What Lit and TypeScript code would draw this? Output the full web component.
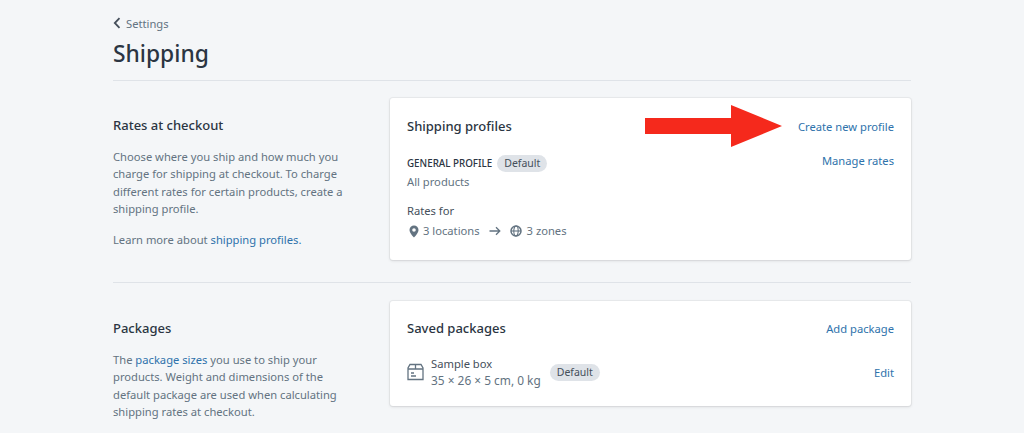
import { LitElement, html, css } from "lit";
import { customElement } from "lit/decorators.js";

@customElement("app-root")
export class AppRoot extends LitElement {
  static styles = css`
    :host { display: block; height: 433px; overflow: hidden; background: #f4f6f8; font-family: "Noto Sans", "Open Sans", sans-serif; font-size: 11.2px; color: #212b36; }
    a { color: #2e72ab; text-decoration: none; }
    .page { width: 798px; margin-left: 113px; padding-top: 14px; }
    .back { display: flex; align-items: center; gap: 5px; height: 18px; color: #637381; }
    .back svg { display: block; }
    h1 { margin: 5px 0 0; font-size: 22.8px; line-height: 34px; font-weight: 500; color: #2b3542; }
    .head { height: 66px; border-bottom: 1px solid #dfe3e8; }
    .section { display: grid; grid-template-columns: 253px 521px; column-gap: 24px; padding-top: 17px; }
    .first { height: 184px; border-bottom: 1px solid #dfe3e8; }
    .second { padding-top: 18px; }
    .side h2 { margin: 0; font-size: 13px; line-height: 18px; font-weight: 500; color: #2b3542; padding-top: 18px; }
    .side p { margin: 0; max-width: 235px; color: #637381; line-height: 17.4px; }
    .first .side p { margin-top: 14px; }
    .first .side p + p { margin-top: 13px; }
    .second .side p { margin-top: 14px; }
    .card { background: #fff; border-radius: 3px; box-shadow: 0 0 0 1px rgba(63,63,68,.05), 0 1px 3px rgba(63,63,68,.15); padding: 19px 17px 0 17px; box-sizing: border-box; position: relative; }
    .c1 { height: 162px; }
    .c2 { height: 105px; padding-top: 18px; }
    .row { display: flex; justify-content: space-between; align-items: center; }
    .title { font-size: 13px; line-height: 18px; font-weight: 500; color: #2b3542; }
    .profile { position: relative; margin-top: 18px; height: 20px; display: flex; align-items: center; }
    .profile a { position: absolute; right: 0; top: -1px; line-height: 18px; }
    .gp { display: flex; align-items: center; gap: 5px; font-size: 9.8px; font-weight: 500; color: #2b3542; }
    .badge { display: inline-block; background: #dfe3e8; color: #454f5b; border-radius: 10px; padding: 0 7px; line-height: 17px; font-size: 10.5px; font-weight: 400; }
    .muted { color: #637381; }
    .all { margin-top: 0; line-height: 18px; }
    .rates { margin-top: 11px; line-height: 18px; color: #454f5b; }
    .loc { display: flex; align-items: center; margin-top: 2px; line-height: 18px; color: #637381; }
    .loc svg { display: block; flex: none; }
    .pin { margin-left: 2px; }
    .l1 { margin-left: 4px; }
    .l2 { margin-left: 9px; }
    .l3 { margin-left: 9px; }
    .l4 { margin-left: 5px; }
    .arrow { position: absolute; left: 255px; top: 7px; }
    .pkg { display: flex; align-items: center; margin-top: 18px; }
    .pkg-info { margin-left: 7px; }
    .pkg-name { line-height: 17px; color: #454f5b; }
    .pkg-dim { line-height: 17px; color: #637381; font-size: 11.900px; }
    .pkg .badge { margin-left: 9px; }
    .pkg a { margin-left: auto; }
  `;

  render() {
    return html`
      <div class="page">
        <div class="head">
          <div class="back">
            <svg width="8" height="12" viewBox="0 0 8 12"><path d="M6.500 1.200 1.800 6l4.700 4.800" fill="none" stroke="#454f5b" stroke-width="1.800"/></svg>
            <span>Settings</span>
          </div>
          <h1>Shipping</h1>
        </div>
        <div class="section first">
          <div class="side">
            <h2>Rates at checkout</h2>
            <p>Choose where you ship and how much you charge for shipping at checkout. To charge different rates for certain products, create a shipping profile.</p>
            <p>Learn more about <a href="#">shipping profiles.</a></p>
          </div>
          <div class="card c1">
            <div class="row">
              <span class="title">Shipping profiles</span>
              <a href="#">Create new profile</a>
            </div>
            <div class="profile">
              <span class="gp">GENERAL PROFILE <span class="badge">Default</span></span>
              <a href="#">Manage rates</a>
            </div>
            <div class="all muted">All products</div>
            <div class="rates">Rates for</div>
            <div class="loc">
              <svg class="pin" width="10" height="13" viewBox="0 0 10 13"><path fill-rule="evenodd" d="M5 .5A4.500 4.500 0 0 0 .5 5c0 3 4.500 7.500 4.500 7.500S9.500 8 9.500 5A4.500 4.500 0 0 0 5 .5Zm0 6.300a1.800 1.800 0 1 1 0-3.600 1.800 1.800 0 0 1 0 3.600Z" fill="#637381"/></svg>
              <span class="l1">3 locations</span>
              <svg class="l2" width="12" height="10" viewBox="0 0 12 10"><path d="M.5 5h10M7 1.200 10.800 5 7 8.800" fill="none" stroke="#637381" stroke-width="1.300"/></svg>
              <svg class="l3" width="12" height="12" viewBox="0 0 12 12"><circle cx="6" cy="6" r="5" fill="none" stroke="#637381" stroke-width="1.500"/><ellipse cx="6" cy="6" rx="2.200" ry="5" fill="none" stroke="#637381" stroke-width="1.100"/><path d="M1 6h10" stroke="#637381" stroke-width="1.100"/></svg>
              <span class="l4">3 zones</span>
            </div>
            <svg class="arrow" width="137" height="42" viewBox="0 0 137 42"><path d="M0 13h86V0l51 21-51 21V29H0Z" fill="#f5291c"/></svg>
          </div>
        </div>
        <div class="section second">
          <div class="side">
            <h2>Packages</h2>
            <p>The <a href="#">package sizes</a> you use to ship your products. Weight and dimensions of the default package are used when calculating shipping rates at checkout.</p>
          </div>
          <div class="card c2">
            <div class="row">
              <span class="title">Saved packages</span>
              <a href="#">Add package</a>
            </div>
            <div class="pkg">
              <svg width="17" height="18" viewBox="0 0 17 18"><path d="M3 1.500h11L16 5v11.500H1V5ZM1 6h15M8.500 1.500V6M4 10h3M4 13h5" fill="none" stroke="#637381" stroke-width="1.300"/></svg>
              <div class="pkg-info">
                <div class="pkg-name">Sample box</div>
                <div class="pkg-dim">35 × 26 × 5 cm, 0 kg</div>
              </div>
              <span class="badge">Default</span>
              <a href="#">Edit</a>
            </div>
          </div>
        </div>
      </div>
    `;
  }
}
